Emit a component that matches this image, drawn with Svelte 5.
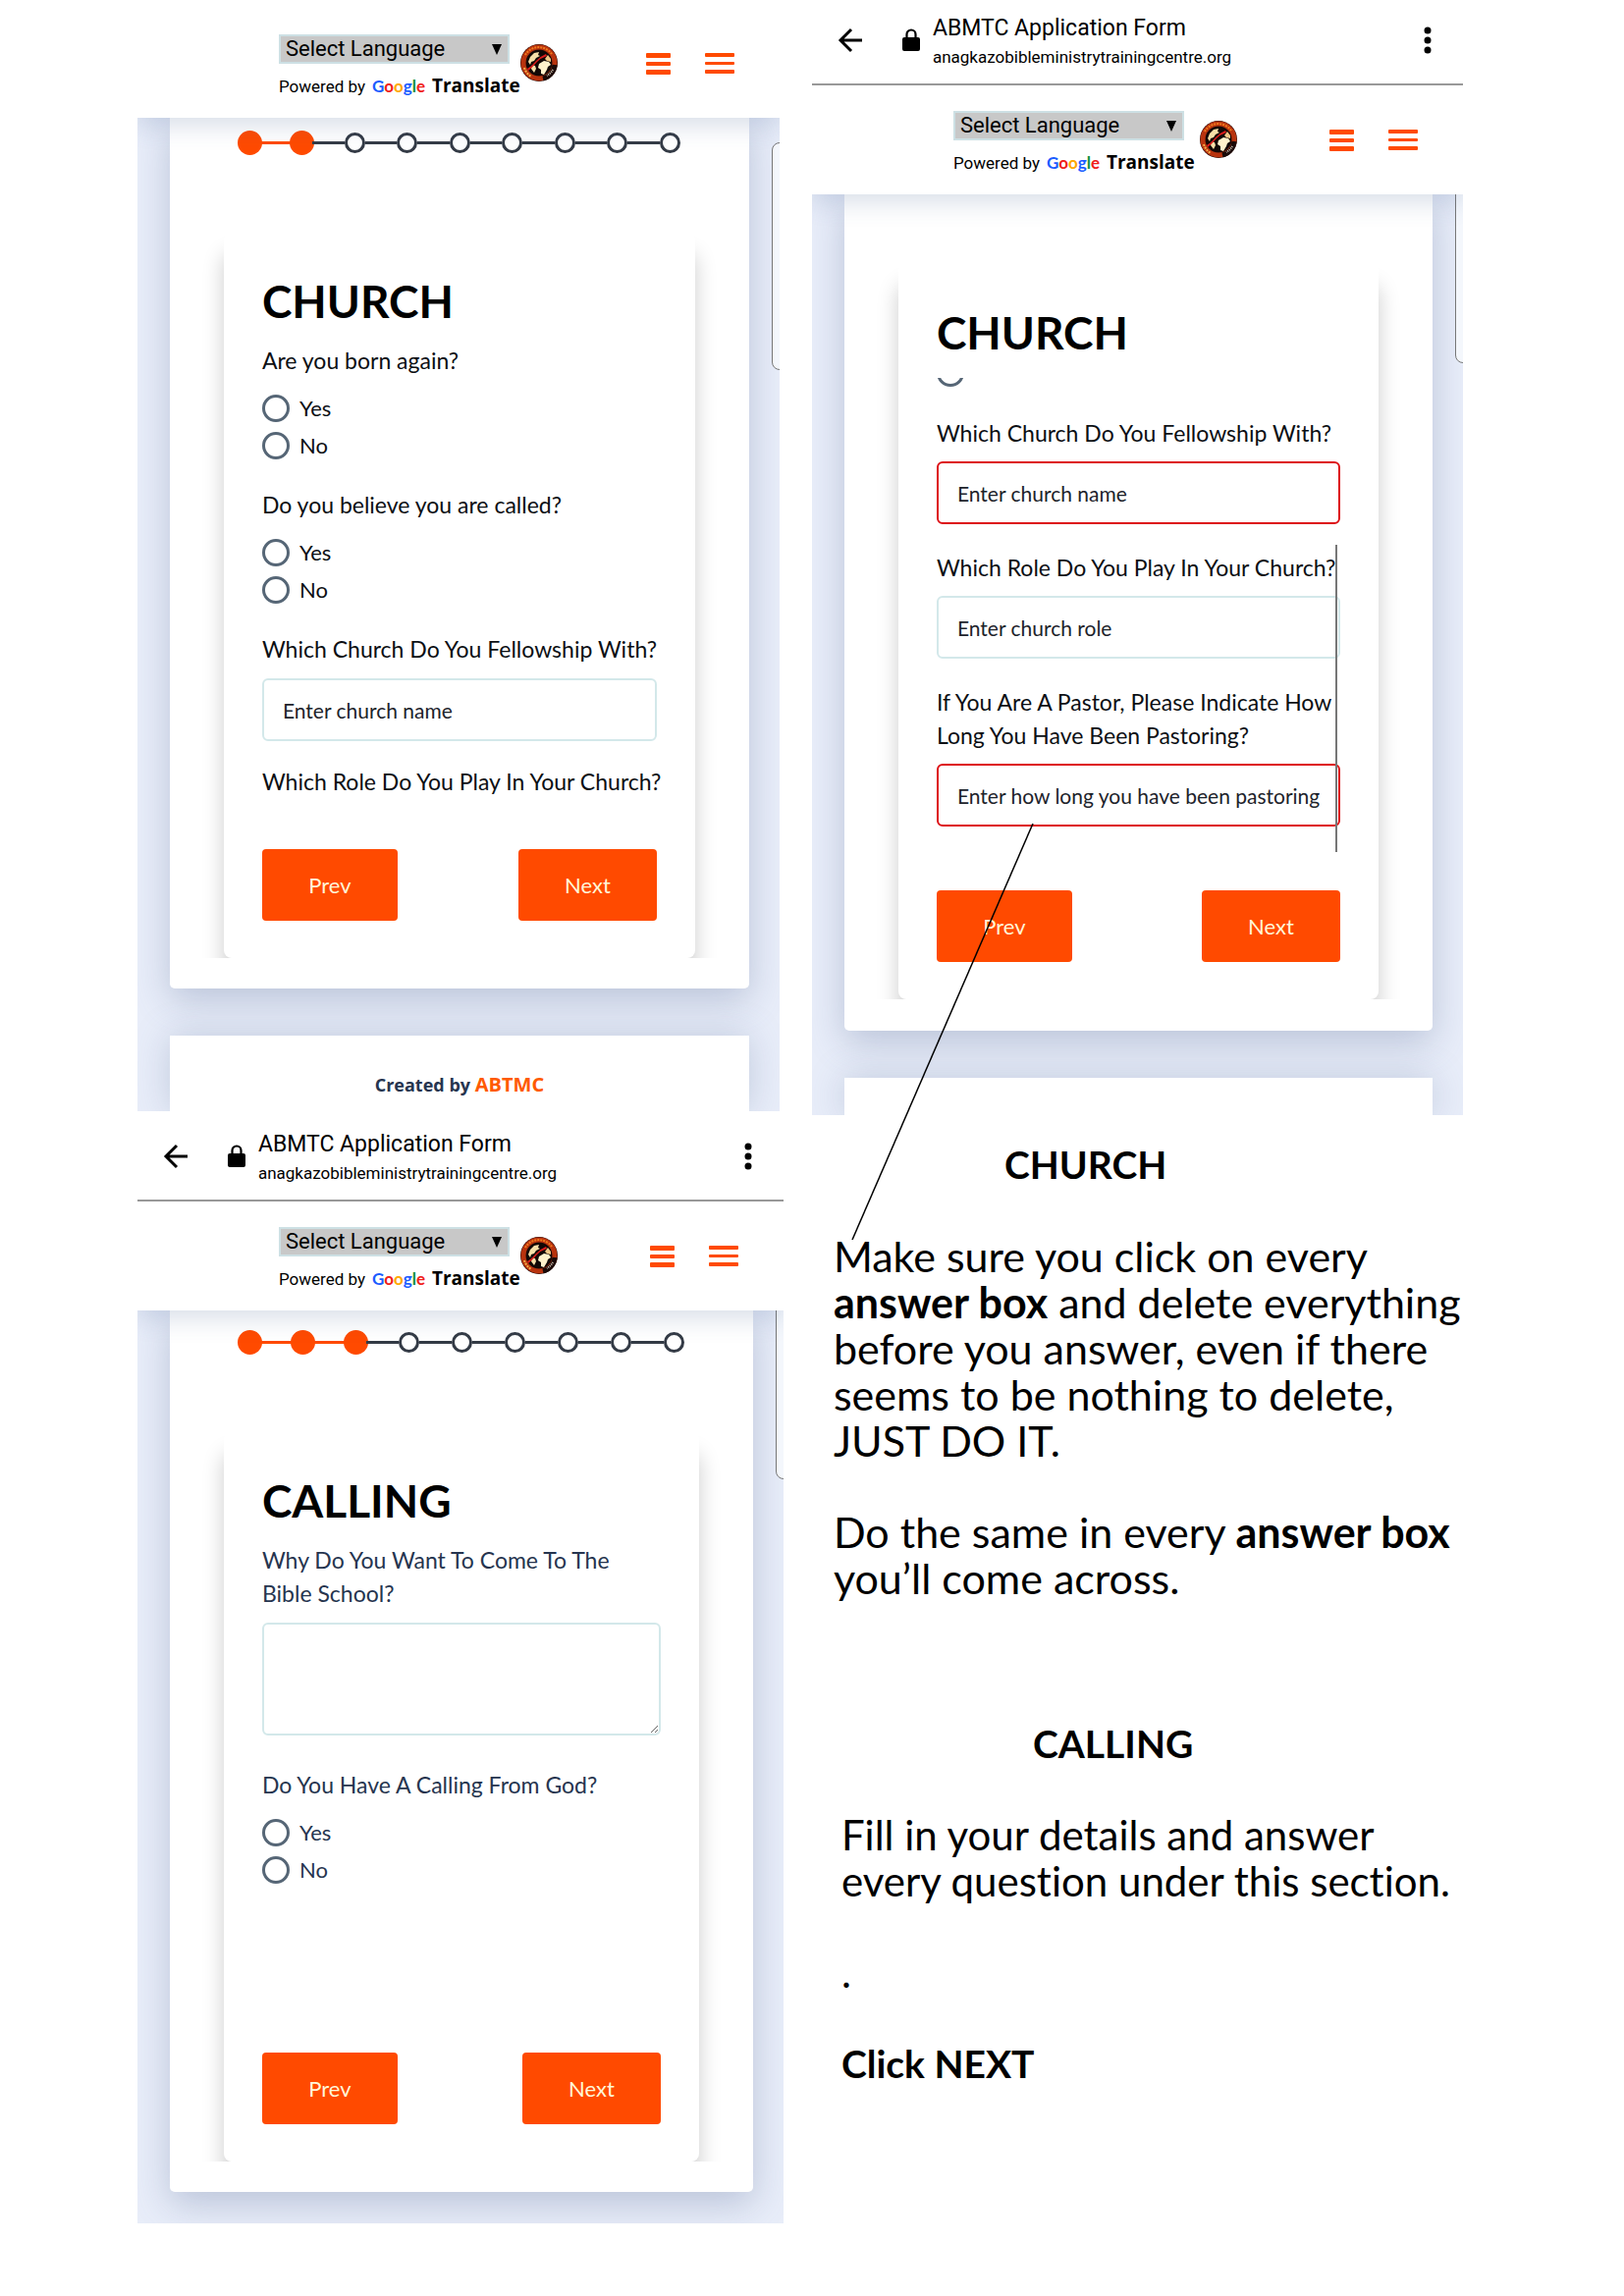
<script>
  const screens = {
    church: { steps: 9, done: 2 },
    calling: { steps: 9, done: 3 },
  };
</script>

{#snippet browserBar()}
  <div class="browser-bar">
    <button class="icon-button back" aria-label="Back">
      <svg width="26" height="26" viewBox="0 0 26 26" fill="none" stroke="#000" stroke-width="3">
        <path d="M25 13H3M14 2 3 13l11 11" />
      </svg>
    </button>
    <svg class="lock" width="18" height="24" viewBox="0 0 18 24">
      <path d="M4.500 10V6a4.500 4.500 0 0 1 9 0v4" fill="none" stroke="#000" stroke-width="2.200" />
      <rect x="0" y="9" width="18" height="14" rx="2" fill="#000" />
    </svg>
    <div class="site">
      <div class="site-title">ABMTC Application Form</div>
      <div class="site-url">anagkazobibleministrytrainingcentre.org</div>
    </div>
    <button class="icon-button more" aria-label="More options">
      <svg width="8" height="28" viewBox="0 0 8 28">
        <circle cx="4" cy="4" r="3.500" /><circle cx="4" cy="14" r="3.500" /><circle cx="4" cy="24" r="3.500" />
      </svg>
    </button>
  </div>
{/snippet}

{#snippet siteHeader()}
  <header class="site-header">
    <div class="translate">
      <div class="select-wrap">
        <select aria-label="Select Language"><option>Select Language</option></select>
        <svg class="caret" width="10" height="11" viewBox="0 0 10 11"><path d="M0 0h10L5 11z" /></svg>
      </div>
      <div class="powered">
        <span>Powered by</span>
        <span class="google"><i class="b">G</i><i class="r">o</i><i class="y">o</i><i class="b">g</i><i class="g">l</i><i class="r">e</i></span>
        <b>Translate</b>
      </div>
    </div>
    <div class="brand">
      <svg width="38" height="38" viewBox="0 0 38 38">
        <circle cx="19" cy="19" r="19" fill="#2a0d08" />
        <circle cx="19" cy="19" r="16" fill="none" stroke="#b8330e" stroke-width="5" />
        <path d="M5 11a16 16 0 0 1 27-1" fill="none" stroke="#f07a1c" stroke-width="2" stroke-dasharray="2 1" />
        <path d="M35 21a16 16 0 0 1-12 14" fill="none" stroke="#1a0a08" stroke-width="5" />
        <path d="M33 26a15 15 0 0 1-6 6" fill="none" stroke="#d8c8b8" stroke-width="2" stroke-dasharray="1 1" />
        <path d="M4 24a16 16 0 0 0 7 9" fill="none" stroke="#f4b04a" stroke-width="2" stroke-dasharray="2 1" />
        <circle cx="19" cy="19" r="13" fill="#120806" />
        <path d="M8 18l2-5 4-4 5-1-1 3 2 1-4 2-2 3-3 1-1 3z" fill="#f6dfa8" />
        <path d="M12 21l3 1 1 3-2 4-3-4z" fill="#f6dfa8" />
        <path d="M19 20l5-3 5 1 2 3-3 2-1 3-3 5-3-1v-4l-3-2z" fill="#fff2cc" />
        <path d="M28 11l3 4v3l-4-1-2-2z" fill="#f0c888" />
        <path d="M7 25q5-3 9-8 5-5 10-7l1 2q-6 2-10 6-5 6-9 9z" fill="#dc1c1c" />
      </svg>
    </div>
    <nav class="menus">
      <button class="icon-button" aria-label="Sections">
        <svg width="25" height="22" viewBox="0 0 25 22" fill="#ff4a00">
          <rect width="25" height="5" rx="1" /><rect y="9" width="25" height="4" rx="1" /><rect y="17" width="25" height="5" rx="1" />
        </svg>
      </button>
      <button class="icon-button" aria-label="Menu">
        <svg width="30" height="22" viewBox="0 0 30 22" fill="#ff4a00">
          <rect width="30" height="4" rx="1" /><rect y="9" width="30" height="3" rx="1" /><rect y="17" width="30" height="4" rx="1" />
        </svg>
      </button>
    </nav>
  </header>
{/snippet}

{#snippet stepper(s)}
  <ol class="stepper">
    {#each Array(s.steps) as _, i}
      <li class:done={i < s.done} class:linked={i < s.done - 1}><span></span></li>
    {/each}
  </ol>
{/snippet}

{#snippet yesNo(name, legend)}
  <fieldset class="field">
    <legend class="label">{legend}</legend>
    <div class="choices">
      <label><input type="radio" {name} value="yes" /><span>Yes</span></label>
      <label><input type="radio" {name} value="no" /><span>No</span></label>
    </div>
  </fieldset>
{/snippet}

{#snippet textField(id, label, placeholder, invalid)}
  <div class="field">
    <label class="label" for={id}>{label}</label>
    <input type="text" {id} {placeholder} class:invalid aria-invalid={invalid} />
  </div>
{/snippet}

{#snippet actions()}
  <div class="actions">
    <button class="action" type="button">Prev</button>
    <button class="action next" type="button">Next</button>
  </div>
{/snippet}

<main>
  <div class="column">
    <section class="phone first">
      {@render siteHeader()}
      <div class="screen">
        <div class="edge"></div>
        <div class="page">
          {@render stepper(screens.church)}
          <div class="clip">
            <form class="card">
              <h1>CHURCH</h1>
              <div class="fields">
                {@render yesNo('born-again', 'Are you born again?')}
                {@render yesNo('called', 'Do you believe you are called?')}
                {@render textField('church-a', 'Which Church Do You Fellowship With?', 'Enter church name', false)}
                <div class="label">Which Role Do You Play In Your Church?</div>
              </div>
              {@render actions()}
            </form>
          </div>
        </div>
        <footer>Created by <a href="#abtmc">ABTMC</a></footer>
      </div>
    </section>

    <section class="phone third">
      {@render browserBar()}
      {@render siteHeader()}
      <div class="screen">
        <div class="edge"></div>
        <div class="page">
          {@render stepper(screens.calling)}
          <div class="clip">
            <form class="card">
              <h1>CALLING</h1>
              <div class="fields">
                <div class="field">
                  <label class="label" for="why">Why Do You Want To Come To The<br />Bible School?</label>
                  <textarea id="why"></textarea>
                </div>
                {@render yesNo('calling', 'Do You Have A Calling From God?')}
              </div>
              {@render actions()}
            </form>
          </div>
        </div>
      </div>
    </section>
  </div>

  <div class="column">
    <section class="phone second">
      {@render browserBar()}
      {@render siteHeader()}
      <div class="screen">
        <div class="edge"></div>
        <div class="page">
          <div class="clip">
            <form class="card">
              <h1>CHURCH</h1>
              <div class="fields">
                <div class="scrolled"><input type="radio" name="called-b" aria-label="No" /></div>
                {@render textField('church-b', 'Which Church Do You Fellowship With?', 'Enter church name', true)}
                {@render textField('role', 'Which Role Do You Play In Your Church?', 'Enter church role', false)}
                <div class="field">
                  <label class="label" for="pastor">If You Are A Pastor, Please Indicate How<br />Long You Have Been Pastoring?</label>
                  <input type="text" id="pastor" class="invalid" placeholder="Enter how long you have been pastoring" />
                </div>
              </div>
              {@render actions()}
              <div class="scrollbar"></div>
            </form>
          </div>
        </div>
        <footer></footer>
      </div>
    </section>

    <section class="notes">
      <h2 class="church-title">CHURCH</h2>
      <p>Make sure you click on every<br /><b>answer box</b> and delete everything<br />before you answer, even if there<br />seems to be nothing to delete,<br />JUST DO IT.</p>
      <p>Do the same in every <b>answer box</b><br />you’ll come across.</p>
      <h2 class="calling-title">CALLING</h2>
      <div class="indented">
        <p>Fill in your details and answer<br />every question under this section.</p>
        <p>.</p>
        <p class="closing"><b>Click NEXT</b></p>
      </div>
    </section>

    <svg class="pointer" width="186" height="424" viewBox="0 0 186 424">
      <path d="M185 0 1 424" stroke="#000" stroke-width="1.500" fill="none" />
    </svg>
  </div>
</main>

<style>
  :global(body) {
    margin: 0;
    background: #fff;
  }
  * {
    box-sizing: border-box;
  }
  main {
    display: grid;
    grid-template-columns: 658fr 663fr;
    column-gap: 29px;
    padding: 0 9.920% 74px 8.460%;
    font-family: Lato, 'Open Sans', sans-serif;
    font-variant-ligatures: none;
    color: #000;
  }
  .column {
    position: relative;
    min-width: 0;
  }
  .first {
    padding-right: 4px;
  }

  .icon-button {
    display: flex;
    padding: 0;
    border: 0;
    background: none;
  }

  .browser-bar {
    display: flex;
    align-items: center;
    height: 87px;
    padding: 1px 32px 4px 26px;
    border-bottom: 2px solid #999;
    font-family: Roboto, sans-serif;
  }
  .third .browser-bar {
    height: 92px;
    padding-top: 6px;
  }
  .lock {
    margin: 0 13px 0 40px;
  }
  .site {
    flex: 1;
    white-space: nowrap;
  }
  .site-title {
    font-size: 23px;
    line-height: 32px;
  }
  .site-url {
    margin-top: 1px;
    font-size: 17px;
    line-height: 24px;
  }

  .site-header {
    position: relative;
    z-index: 1;
    display: flex;
    padding: 26px 46px 20px 144px;
    background: #fff;
    box-shadow: 0 8px 24px rgba(60, 90, 140, 0.2);
    clip-path: inset(0 0 -40px 0);
    font-family: Roboto, sans-serif;
  }
  .first .site-header {
    padding-top: 35px;
  }
  .translate {
    flex: none;
    width: 246px;
  }
  .second .translate {
    width: 251px;
  }
  .select-wrap {
    position: relative;
    width: 235px;
  }
  select {
    display: block;
    width: 100%;
    height: 30px;
    padding: 0 5px;
    border: 2px solid #cde0e4;
    border-radius: 0;
    appearance: none;
    background: #c8c8c8;
    color: #000;
    font: 22px/26px Roboto, sans-serif;
  }
  .caret {
    position: absolute;
    top: 10px;
    right: 8px;
    pointer-events: none;
  }
  .powered {
    display: flex;
    align-items: baseline;
    gap: 7px;
    margin-top: 10px;
    font-size: 17px;
    line-height: 24px;
    white-space: nowrap;
  }
  .google {
    font-family: Lato, sans-serif;
    font-size: 17px;
    font-weight: 700;
  }
  .google i {
    font-style: normal;
  }
  .google .b { color: #1a5cff; }
  .google .r { color: #f0201a; }
  .google .y { color: #ffa800; }
  .google .g { color: #12903a; }
  .powered b {
    font-family: 'Open Sans', sans-serif;
    font-size: 19px;
  }
  .brand {
    display: flex;
    align-items: center;
    height: 58px;
  }
  .menus {
    display: flex;
    align-items: center;
    gap: 35px;
    height: 60px;
    margin-left: auto;
  }

  .screen {
    position: relative;
    overflow: hidden;
    padding: 0 31px 0 33px;
    background: #e8edf9;
  }
  .third .screen {
    padding-bottom: 32px;
  }
  .edge {
    position: absolute;
    top: 25px;
    right: -8px;
    width: 16px;
    height: 232px;
    border: 1px solid #777;
    border-radius: 9px;
    background: #f4f7fc;
  }
  .second .edge,
  .third .edge {
    top: -60px;
  }
  .page {
    padding: 13px 25px 31px;
    border-radius: 0 0 5px 5px;
    background: #fff;
    box-shadow: 0 12px 36px rgba(90, 110, 150, 0.32);
  }
  .second .page {
    padding-top: 71px;
    padding-bottom: 32px;
  }
  .third .page {
    padding-top: 20px;
  }

  .stepper {
    display: flex;
    justify-content: space-between;
    margin: 0 43px 80px 44px;
    padding: 0;
    list-style: none;
  }
  .stepper li {
    position: relative;
    display: flex;
    flex: 1;
    align-items: center;
    height: 24px;
  }
  .stepper li:last-child {
    flex: none;
  }
  .stepper span {
    flex: none;
    width: 21px;
    height: 21px;
    margin: 0 2px;
    border: 3px solid #343b46;
    border-radius: 50%;
  }
  .stepper li.done span {
    width: 25px;
    height: 25px;
    margin: 0;
    border: 0;
    background: #ff4a00;
  }
  .stepper li:not(:last-child)::after {
    content: '';
    flex: 1;
    height: 3px;
    margin: 0 -2px;
    background: #343b46;
  }
  .stepper li.linked::after {
    background: #ff4a00;
  }

  .clip {
    overflow: hidden;
    padding: 0 30px;
  }
  .card {
    position: relative;
    padding: 42px 39px 38px;
    border-radius: 8px;
    background: #fff;
    box-shadow: 0 22px 22px rgba(0, 0, 0, 0.2);
  }
  h1 {
    margin: 0 0 15px;
    font-size: 46px;
    font-weight: 700;
    line-height: 56px;
  }
  .fields {
    display: flex;
    flex-direction: column;
    gap: 24px;
    height: 515px;
    color: #0c0f14;
    white-space: nowrap;
  }
  .second .fields {
    gap: 27px;
    height: 522px;
    margin-top: 18px;
  }
  .third .fields {
    gap: 33px;
    height: 519px;
    color: #26354f;
  }
  .field {
    display: flex;
    flex-direction: column;
    min-width: 0;
    margin: 0;
    padding: 0;
    border: 0;
  }
  .label {
    display: block;
    padding: 0;
    font-size: 23px;
    line-height: 34px;
  }
  .choices {
    padding-top: 13px;
  }
  .choices label {
    display: flex;
    align-items: center;
    gap: 10px;
    height: 38px;
    font-size: 22px;
    line-height: 34px;
  }
  input[type='radio'] {
    flex: none;
    width: 28px;
    height: 28px;
    margin: 0;
    border: 3px solid #566676;
    border-radius: 50%;
    appearance: none;
    background: #fff;
  }
  .scrolled {
    display: flex;
    flex: none;
    align-items: flex-end;
    height: 12px;
    padding-bottom: 3px;
    overflow: hidden;
  }
  input[type='text'],
  textarea {
    width: 100%;
    height: 64px;
    margin-top: 13px;
    padding: 0 19px;
    border: 2px solid #d3e8ea;
    border-radius: 6px;
    background: #fff;
    color: #1d232b;
    font: 21px Lato, 'Open Sans', sans-serif;
  }
  .second input[type='text'] {
    margin-top: 12px;
  }
  input[type='text'].invalid {
    border-color: #dd0f14;
  }
  input::placeholder {
    color: #1d232b;
    opacity: 1;
  }
  textarea {
    display: block;
    height: 115px;
  }
  .actions {
    display: flex;
    justify-content: space-between;
  }
  .action {
    width: 138px;
    height: 73px;
    border: 0;
    border-radius: 4px;
    background: #ff4a00;
    color: #fff6d8;
    font: 22px Lato, sans-serif;
  }
  .action.next {
    width: 141px;
  }
  .scrollbar {
    position: absolute;
    top: 286px;
    right: 42px;
    width: 2px;
    height: 313px;
    background: #777;
  }
  footer {
    height: 77px;
    margin-top: 48px;
    padding-top: 36px;
    background: #fff;
    box-shadow: 0 0 36px rgba(90, 110, 150, 0.28);
    color: #26354f;
    font: 700 18px/28px 'Open Sans', sans-serif;
    text-align: center;
  }
  .second footer {
    height: 38px;
    padding: 0;
  }
  footer a {
    color: #ff5a00;
    font-size: 20px;
    text-decoration: none;
  }

  .notes {
    padding: 27px 0 0 22px;
    font-size: 43px;
    line-height: 47px;
    white-space: nowrap;
  }
  .notes p {
    margin: 46px 0 0;
  }
  .notes h2 {
    margin: 0;
    font-size: 39px;
    font-weight: 700;
    line-height: 47px;
  }
  .notes .church-title {
    padding-left: 174px;
  }
  .notes .calling-title {
    margin-top: 122px;
    padding-left: 203px;
  }
  .notes .indented {
    padding-left: 8px;
    font-size: 42px;
  }
  .notes .closing {
    font-size: 39px;
  }
  .pointer {
    position: absolute;
    top: 839px;
    left: 40px;
    z-index: 2;
    pointer-events: none;
  }
</style>
